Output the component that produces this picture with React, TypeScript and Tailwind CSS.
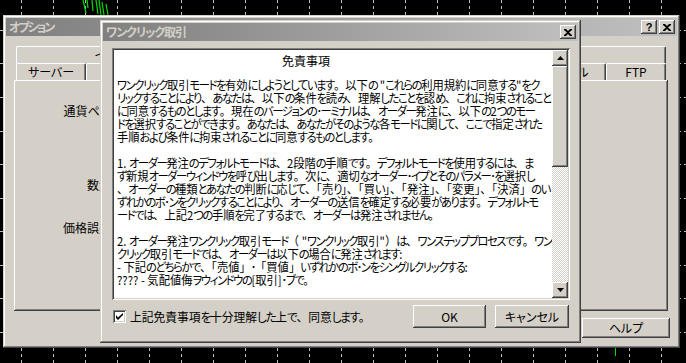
import React from 'react';

const frame =
  'shadow-[inset_-1px_-1px_0_#404040,inset_1px_1px_0_#d4d0c8,inset_-2px_-2px_0_#808080,inset_2px_2px_0_#ffffff]';
const raised =
  'shadow-[inset_-1px_-1px_0_#404040,inset_1px_1px_0_#ffffff,inset_-2px_-2px_0_#808080]';
const sunken =
  'shadow-[inset_1px_1px_0_#808080,inset_-1px_-1px_0_#ffffff,inset_2px_2px_0_#404040,inset_-2px_-2px_0_#d4d0c8]';

function ChartBg() {
  const xs = Array.from({ length: 21 }, (_, i) => 21 + 32 * i + 0.5);
  const ys = [30, 63, 97, 131, 164, 198, 231, 265, 298, 332];
  return (
    <svg className="absolute inset-0" width={686} height={363}>
      {xs.map((x) => (
        <line key={'v' + x} x1={x} y1={0} x2={x} y2={363} stroke="#bcbcbc" strokeDasharray="3 3" />
      ))}
      {ys.map((y) => (
        <line key={'h' + y} x1={0} y1={y + 0.5} x2={686} y2={y + 0.5} stroke="#bcbcbc" strokeDasharray="3 3" />
      ))}
      <g stroke="#00e000" strokeWidth={1.2} fill="none">
        <line x1={83} y1={0} x2={86} y2={13} />
        <line x1={87} y1={0} x2={88} y2={8} />
        <line x1={92} y1={0} x2={93} y2={11} />
        <line x1={96} y1={0} x2={98} y2={14} />
        <line x1={99} y1={0} x2={101} y2={15} />
        <line x1={102} y1={2} x2={104} y2={15} />
        <line x1={106} y1={4} x2={108} y2={15} />
      </g>
      <line x1={615.5} y1={347} x2={615.5} y2={356} stroke="#00e000" />
    </svg>
  );
}

function CloseGlyph() {
  return (
    <svg width="8" height="7" viewBox="0 0 8 7">
      <path d="M0 0h2l2 2 2-2h2v1L5 3.5 8 6v1H6L4 5 2 7H0V6l3-2.5L0 1z" fill="#000" />
    </svg>
  );
}

function TitleBtn({ children }: { children: React.ReactNode }) {
  return (
    <div className={`w-[16px] h-[14px] bg-[#d4d0c8] flex items-center justify-center ${raised}`}>{children}</div>
  );
}

function Arrow({ up }: { up?: boolean }) {
  return (
    <svg width="7" height="4" viewBox="0 0 7 4">
      {up ? <polygon points="3.5,0 7,4 0,4" fill="#000" /> : <polygon points="0,0 7,0 3.5,4" fill="#000" />}
    </svg>
  );
}

const upperTabs = [
  { label: 'イベント', cls: 'w-[200px]' },
  { label: 'コミュニティ', cls: 'w-[225px]' },
  { label: 'シグナル', cls: 'w-[225px]' },
];

const lowerTabs = [
  { label: 'サーバー', cls: 'w-[70px]' },
  { label: 'チャート', cls: 'w-[70px]' },
  { label: 'オブジェクト', cls: 'w-[90px]' },
  { label: '取引', cls: 'w-[60px]' },
  { label: 'エキスパートアドバイザ', cls: 'w-[145px]' },
  { label: '通知機能', cls: 'w-[80px]' },
  { label: 'eメール', cls: 'w-[75px]' },
  { label: 'FTP', cls: 'w-[60px]' },
];

function Tab({ label, cls }: { label: string; cls: string }) {
  return (
    <div
      className={`${cls} h-[17px] border-t border-l border-white rounded-tl-[2px] rounded-tr-[2px] border-r border-r-[#404040] shadow-[inset_-1px_0_0_#808080] flex items-center justify-center text-[12px] leading-none text-black`}
    >
      {label}
    </div>
  );
}

const bodyLines: string[] = [
  'ワンクリック取引モードを有効にしようとしています。以下の "これらの利用規約に同意する"をク',
  'リックすることにより、あなたは、以下の条件を読み、理解したことを認め、これに拘束されること',
  'に同意するものとします。現在のバージョンの･ーミナルは、オーダー発注に、以下の2つのモー',
  'ドを選択することができます。あなたは、あなたがそのような各モードに関して、ここで指定された',
  '手順および条件に拘束されることに同意するものとします。',
  '',
  '1. オーダー発注のデフォルトモードは、2段階の手順です。デフォルトモードを使用するには、ま',
  'ず新規オーダーウィンドウを呼び出します。次に、適切なオーダー･イプとそのパラメー･を選択し',
  '、オーダーの種類とあなたの判断に応じて、「売り」、「買い」、「発注」、「変更」、「決済」のい',
  'ずれかのボ･ンをクリックすることにより、オーダーの送信を確定する必要があります。デフォルトモ',
  'ードでは、上記2つの手順を完了するまで、オーダーは発注されません。',
  '',
  '2. オーダー発注ワンクリック取引モード（ "ワンクリック取引"）は、ワンステッププロセスです。ワン',
  'クリック取引モードでは、オーダーは以下の場合に発注されます:',
  '- 下記のどちらかで、「売値」･「買値」いずれかのボ･ンをシングルクリックする:',
  '???? - 気配値侮ヲウィンドウの[取引]･ブで。',
];

const punct = /([、。「」（）])/;
const kana = /([\u3040-\u30ff\uff65-\uff9f]+)/;

function renderLine(l: string) {
  const out: React.ReactNode[] = [];
  l.split(punct).forEach((p, i) => {
    if (p.length === 1 && punct.test(p)) {
      out.push(
        <span key={'p' + i} className="[font-feature-settings:normal]">
          {p}
        </span>
      );
    } else {
      p.split(kana).forEach((q, j) => {
        if (q && kana.test(q)) {
          out.push(
            <span key={'k' + i + '-' + j} className="tracking-[-1.5px]">
              {q}
            </span>
          );
        } else if (q) {
          out.push(<React.Fragment key={'t' + i + '-' + j}>{q}</React.Fragment>);
        }
      });
    }
  });
  return out;
}

export default function App() {
  return (
    <div className="relative w-[686px] h-[363px] bg-black overflow-hidden font-['Noto_Sans_CJK_JP',sans-serif] [font-feature-settings:'palt'] text-black">
      <ChartBg />

      {/* Options window (behind) */}
      <div className={`absolute left-[3px] top-[15px] w-[677px] h-[333px] bg-[#d4d0c8] p-[3px] flex flex-col ${frame}`}>
        <div className="h-[18px] flex items-center justify-between bg-gradient-to-r from-[#808080] to-[#c0c0c0] pl-[3px] pr-[2px]">
          <span className="text-[12px] font-bold leading-none text-[#d4d0c8] tracking-[-2px]">オプション</span>
          <div className="flex gap-[2px]">
            <TitleBtn>
              <span className="text-[11px] font-bold leading-none font-['Liberation_Sans',sans-serif]">?</span>
            </TitleBtn>
            <TitleBtn>
              <CloseGlyph />
            </TitleBtn>
          </div>
        </div>
        <div className="pl-[8px] pr-[9px] pt-[10px] flex flex-col">
          <div className="flex pl-[2px]">
            {upperTabs.map((t) => (
              <Tab key={t.label} label={t.label} cls={t.cls} />
            ))}
          </div>
          <div className="flex pl-[2px]">
            {lowerTabs.map((t) => (
              <Tab key={t.label} label={t.label} cls={t.cls} />
            ))}
          </div>
          <div className={`h-[231px] ${raised} flex flex-col text-[12px] leading-[13px]`}>
            <div className="mt-[24px] w-[97px] text-right">通貨ペア</div>
            <div className="mt-[61px] w-[97px] text-right">数量</div>
            <div className="mt-[30px] w-[97px] text-right">価格誤差</div>
          </div>
        </div>
        <div className="flex justify-end pr-[7px] mt-[7px]">
          <div className={`w-[88px] h-[20px] bg-[#d4d0c8] flex items-center justify-center text-[12px] leading-none ${raised}`}>
            ヘルプ
          </div>
        </div>
      </div>

      {/* One-click trading dialog */}
      <div className={`absolute left-[100px] top-[20px] w-[481px] h-[323px] bg-[#d4d0c8] p-[3px] flex flex-col ${frame}`}>
        <div className="h-[18px] flex items-center justify-between bg-gradient-to-r from-[#808080] to-[#c0c0c0] pl-[3px] pr-[2px]">
          <span className="text-[12px] font-bold leading-none text-[#d4d0c8] tracking-[-1px]">ワンクリック取引</span>
          <TitleBtn>
            <CloseGlyph />
          </TitleBtn>
        </div>

        <div className={`mt-[7px] ml-[9px] mr-[8px] h-[252px] bg-white p-[2px] flex ${sunken}`}>
          <div className="flex-1 overflow-hidden pl-[3px] pt-[4px] text-[12px] leading-[13px]">
            <div className="ml-[165px] whitespace-nowrap">免責事項</div>
            <div className="mt-[11px] origin-left scale-x-[0.94]">
              {bodyLines.map((l, i) => (
                <div key={i} className="h-[13px] whitespace-nowrap">
                  {renderLine(l)}
                </div>
              ))}
            </div>
          </div>
          <div className="w-[16px] flex flex-col bg-[image:repeating-conic-gradient(#d4d0c8_0_25%,#ffffff_0_50%)] bg-[length:2px_2px]">
            <div className={`h-[16px] bg-[#d4d0c8] flex items-center justify-center ${raised}`}>
              <Arrow up />
            </div>
            <div className={`h-[101px] bg-[#d4d0c8] ${raised}`} />
            <div className="flex-1" />
            <div className={`h-[16px] bg-[#d4d0c8] flex items-center justify-center ${raised}`}>
              <Arrow />
            </div>
          </div>
        </div>

        <div className="mt-[5px] ml-[10px] mr-[9px] h-[23px] flex items-center">
          <div className={`w-[13px] h-[13px] bg-white flex items-center justify-center ${sunken}`}>
            <svg width="7" height="7" viewBox="0 0 7 7">
              <path d="M0 2v3l2 2 5-5V-0L2 4.5z" fill="#000" />
            </svg>
          </div>
          <span className="ml-[4px] inline-block origin-left scale-x-[0.98] whitespace-nowrap text-[12px] leading-none">
            {renderLine('上記免責事項を十分理解した上で、同意します。')}
          </span>
          <div className="ml-auto flex gap-[9px]">
            <div className={`w-[73px] h-[23px] bg-[#d4d0c8] flex items-center justify-center text-[12px] leading-none ${raised}`}>
              OK
            </div>
            <div className={`w-[74px] h-[23px] bg-[#d4d0c8] flex items-center justify-center text-[12px] leading-none ${raised}`}>
              キャンセル
            </div>
          </div>
        </div>
      </div>
    </div>
  );
}
